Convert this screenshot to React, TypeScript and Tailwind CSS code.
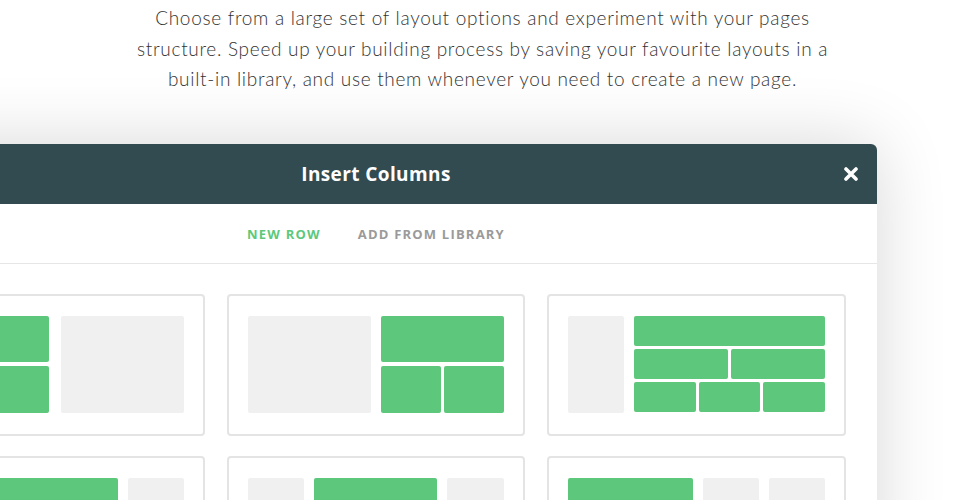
import React from "react";

const G = "bg-[#5dc87b] rounded-[2px]";
const E = "bg-[#f0f0f0] rounded-[2px]";

function Card({ children, gap = "gap-[10px]" }: { children: React.ReactNode; gap?: string }) {
  return (
    <div className="h-[142px] rounded-[4px] border-2 border-[#e4e4e4] bg-white px-[19px] pt-[20px] pb-[21px]">
      <div className={`flex h-[97px] ${gap}`}>{children}</div>
    </div>
  );
}

export default function App() {
  return (
    <div className="h-[500px] w-[965px] overflow-hidden bg-white">
      <p
        className="pt-[3px] text-center text-[19px] leading-[30.5px] text-[#333] font-light tracking-[0.7px]"
        style={{ fontFamily: "Lato, 'Open Sans', sans-serif" }}
      >
        Choose from a large set of layout options and experiment with your pages
        <br />
        structure. Speed up your building process by saving your favourite layouts in a
        <br />
        built-in library, and use them whenever you need to create a new page.
      </p>

      <div
        className="ml-[-125px] mt-[49px] w-[1002px] rounded-t-[6px] bg-white shadow-[0_0_70px_rgba(0,0,0,0.16)]"
        style={{ fontFamily: "'Open Sans', sans-serif" }}
      >
        <div className="relative flex h-[60px] items-center justify-center rounded-t-[6px] bg-[#324b50] pt-[1px]">
          <span className="text-[19px] font-bold tracking-[0.4px] text-white">Insert Columns</span>
          <svg
            className="absolute right-[19px] top-[23px] h-[14px] w-[14px]"
            viewBox="0 0 14 14"
          >
            <path d="M2 2L12 12M12 2L2 12" stroke="white" strokeWidth="3.6" strokeLinecap="round" />
          </svg>
        </div>

        <div className="flex h-[60px] items-center justify-center gap-[37px] border-b border-[#e6e6e6] pt-[3px] text-[13px] font-bold tracking-[1.2px]">
          <span className="text-[#5dc87b]">NEW ROW</span>
          <span className="text-[#9a9a9a]">ADD FROM LIBRARY</span>
        </div>

        <div className="grid grid-cols-3 gap-x-[22px] gap-y-[20px] px-[31px] pt-[30px] pb-[30px]">
          <Card gap="gap-[12px]">
            <div className="flex w-[122px] flex-col gap-[4px]">
              <div className={`flex-1 ${G}`} />
              <div className={`flex-1 ${G}`} />
            </div>
            <div className={`flex-1 ${E}`} />
          </Card>
          <Card>
            <div className={`w-[123px] ${E}`} />
            <div className="flex flex-1 flex-col gap-[4px]">
              <div className={`flex-1 ${G}`} />
              <div className="flex flex-1 gap-[3px]">
                <div className={`flex-1 ${G}`} />
                <div className={`flex-1 ${G}`} />
              </div>
            </div>
          </Card>
          <Card>
            <div className={`w-[56px] ${E}`} />
            <div className="flex flex-1 flex-col gap-[3px]">
              <div className={`flex-1 ${G}`} />
              <div className="flex flex-1 gap-[3px]">
                <div className={`flex-1 ${G}`} />
                <div className={`flex-1 ${G}`} />
              </div>
              <div className="flex flex-1 gap-[3px]">
                <div className={`flex-1 ${G}`} />
                <div className={`flex-1 ${G}`} />
                <div className={`flex-1 ${G}`} />
              </div>
            </div>
          </Card>
          <Card>
            <div className={`flex-1 ${G}`} />
            <div className={`w-[56px] ${E}`} />
          </Card>
          <Card>
            <div className={`w-[56px] ${E}`} />
            <div className={`flex-1 ${G}`} />
            <div className={`w-[57px] ${E}`} />
          </Card>
          <Card>
            <div className={`flex-1 ${G}`} />
            <div className={`w-[56px] ${E}`} />
            <div className={`w-[56px] ${E}`} />
          </Card>
        </div>
      </div>
    </div>
  );
}
